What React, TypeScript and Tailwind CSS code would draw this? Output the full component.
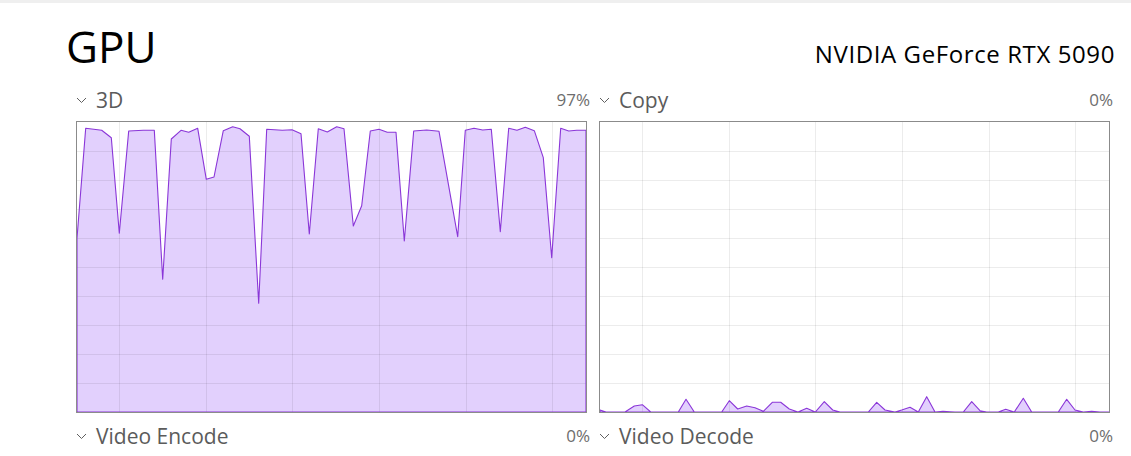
import React from "react";

// sample points in page pixels, taken from the reference
const load3d: [number, number][] = [
  [76.7, 238.3], [85.7, 128.3], [101.7, 130.3], [111.3, 137.7], [119.3, 233.3], [128.7, 131],
  [143.3, 130.3], [154.3, 130.3], [162.7, 279.3], [171.3, 139], [181, 130.3], [188.7, 132.3],
  [197.7, 128.3], [206.3, 179.3], [214, 177], [223.3, 130.7], [232.7, 126.7], [240, 128.7],
  [249.3, 136.3], [258.7, 303.3], [266.7, 129.3], [282.3, 130.3], [292, 129.7], [301, 133.7],
  [309.3, 234], [318.3, 128.7], [327.3, 132], [336.7, 126.7], [344, 128.7], [353.3, 226],
  [361.7, 205.7], [370.3, 131], [379, 129.3], [387.3, 132.3], [396, 132.3], [404.3, 241],
  [413.7, 131], [426.7, 130], [439, 131.3], [457.7, 236.7], [465.3, 130.3], [474, 128.3],
  [482.7, 130], [491.3, 129.3], [500.3, 231.7], [508.7, 128.3], [517, 130.3], [525.3, 127.3],
  [534.3, 130.7], [543.3, 157.7], [551.7, 257.7], [560.7, 128.3], [568.7, 131], [576.7, 130.3],
  [586, 130.3],
];

const loadCopy: [number, number][] = [
  [599.3, 410], [606, 412.7], [625, 412.7], [634.3, 406], [642.3, 404.7], [650.7, 412.7],
  [678.3, 412.7], [686, 399.3], [694.3, 412], [721.7, 412.7], [729.3, 400.7], [737.7, 409],
  [746.7, 406], [755, 407.7], [763.3, 411.3], [772.3, 402.3], [780.7, 402.3], [789.3, 409],
  [798, 412], [806.7, 408.3], [815.3, 412.3], [824.3, 401.7], [832.7, 410], [840, 412.7],
  [868.3, 412.7], [876.7, 402.3], [885, 410], [895, 412.7], [901.7, 410], [910, 407.3],
  [918.3, 412.7], [926.7, 396.7], [935, 412.3], [943, 411.4], [950, 411.8], [955, 412.7],
  [963.3, 412.3], [971.7, 401.7], [980, 410.7], [986.7, 412.7], [998.3, 412.7], [1005.7, 409.3],
  [1014.3, 412.7], [1023.3, 398.3], [1031.7, 412.7], [1058.3, 412.7], [1066.7, 399.3],
  [1075, 410], [1083.3, 412], [1091.7, 411.3], [1100, 412.7], [1109, 412.7],
];

const W = 509;
const H = 290;

function Chevron() {
  return (
    <svg width="11" height="7" viewBox="0 0 11 7" className="shrink-0">
      <polyline points="1,1 5.5,5.5 10,1" fill="none" stroke="#5f5f5f" strokeWidth="1" />
    </svg>
  );
}

function Label({ name, value }: { name: string; value: string }) {
  return (
    <div className="flex h-[26px] items-center justify-between">
      <div className="flex items-center gap-[9px]">
        <Chevron />
        <span className="text-[21px] leading-[26px] text-[#5b5b5b]">{name}</span>
      </div>
      <span className="-mr-[3px] text-[17px] leading-[26px] text-[#6d6d6d]">{value}</span>
    </div>
  );
}

function Chart({ points, ox }: { points: [number, number][]; ox: number }) {
  const pts = points.map(([x, y]) => [Math.max(0, Math.min(W, x - ox)), Math.min(H, y - 122)]);
  const line = pts.map(([x, y]) => `${x.toFixed(1)},${y.toFixed(1)}`).join(" ");
  const first = pts[0];
  const last = pts[pts.length - 1];
  const area = `${first[0]},${H} ${line} ${last[0]},${H}`;
  const cols = [42, 129, 215, 302, 389, 475];
  const rows = [1, 2, 3, 4, 5, 6, 7, 8, 9].map((i) => (H / 10) * i);

  return (
    <div className="h-[292px] border border-[#8b8b8b] bg-white">
      <svg width={W} height={H} viewBox={`0 0 ${W} ${H}`} className="block">
        <polygon points={area} fill="#e2d0fd" />
        {cols.map((x) => (
          <line key={x} x1={x + 0.5} y1={0} x2={x + 0.5} y2={H} stroke="rgba(0,0,0,0.075)" strokeWidth="1" />
        ))}
        {rows.map((y) => (
          <line key={y} x1={0} y1={Math.round(y) + 0.5} x2={W} y2={Math.round(y) + 0.5} stroke="rgba(0,0,0,0.075)" strokeWidth="1" />
        ))}
        <polygon points={area} fill="none" stroke="#8a36d8" strokeWidth="1.1" strokeLinejoin="round" />
      </svg>
    </div>
  );
}

export default function App() {
  return (
    <div
      className="h-[456px] w-[1131px] overflow-hidden border-t-[3px] border-[#efefef] bg-white"
      style={{ fontFamily: '"Open Sans", "Noto Sans", sans-serif' }}
    >
      <div className="mt-[19px] flex h-[48px] items-end justify-between pl-[66px] pr-[16px]">
        <h1 className="text-[44px] leading-[48px] text-black">GPU</h1>
        <div className="mb-[2px] text-[24px] leading-[28px] tracking-[0.6px] text-black">NVIDIA GeForce RTX 5090</div>
      </div>

      <div className="mt-[17px] grid grid-cols-2 gap-x-[12px] pl-[76px] pr-[21px]">
        <div>
          <Label name="3D" value="97%" />
          <div className="mt-[8px]">
            <Chart points={load3d} ox={77} />
          </div>
          <div className="mt-[10px]">
            <Label name="Video Encode" value="0%" />
          </div>
        </div>
        <div>
          <Label name="Copy" value="0%" />
          <div className="mt-[8px]">
            <Chart points={loadCopy} ox={600} />
          </div>
          <div className="mt-[10px]">
            <Label name="Video Decode" value="0%" />
          </div>
        </div>
      </div>
    </div>
  );
}
